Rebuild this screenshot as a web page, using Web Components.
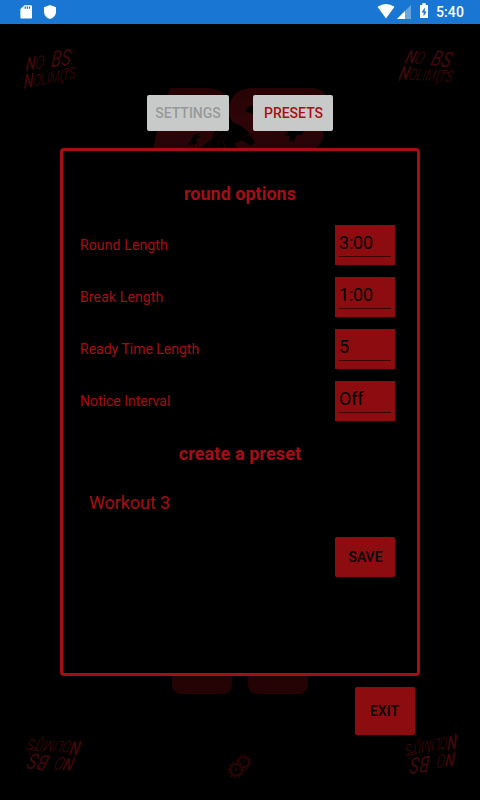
<!DOCTYPE html>
<html lang="en">
<head>
<meta charset="utf-8">
<title>Round timer presets</title>
<style>
html,body{margin:0;width:480px;height:800px;overflow:hidden;background:#000}
body{font-family:Roboto,"Liberation Sans",sans-serif}
</style>
</head>
<body>
<timer-app></timer-app>
<script>
function define(name, markup) {
  const t = document.createElement('template');
  t.innerHTML = markup;
  customElements.define(name, class extends HTMLElement {
    constructor() {
      super();
      this.attachShadow({mode: 'open'}).appendChild(t.content.cloneNode(true));
    }
  });
}

define('status-bar', `
<style>
:host{display:flex;justify-content:space-between;align-items:flex-start;height:24px;background:#1976d2;color:#fff;box-sizing:border-box}
svg{display:block}
.time{font:500 14px/24px Roboto,sans-serif;letter-spacing:.1px;width:44px}
.r{display:flex}
</style>
<svg width="70" height="24" fill="#fff"><path fill-rule="evenodd" d="M24.500 5.200h6.300a1.200 1.200 0 0 1 1.200 1.200v11a1.200 1.200 0 0 1-1.200 1.200h-9.200a1.200 1.200 0 0 1-1.200-1.200V9zM24.600 6.400v2.400h1.300V6.400zM26.700 6.400v2.400H28V6.400zM28.800 6.400v2.400h1.300V6.400z"/><path d="M50 5l6 2.300v4.500c0 3.400-2.500 6.300-6 7.200-3.500-.9-6-3.800-6-7.200V7.300z"/></svg>
<div class="r"><svg width="70" height="24" viewBox="366 0 70 24" fill="#fff"><path d="M377.500 6.800Q386 1.400 394.500 6.800L386 18.400z"/><path fill-opacity=".35" d="M411 5v14h-14z"/><path d="M405 11v8h-8z"/><path fill-rule="evenodd" d="M422.300 3.300h3.400V5h2.300v13h-8V5h2.300zM424.800 7.500l-3.200 5h2v4l3-5h-1.800z"/></svg><span class="time">5:40</span></div>`);

define('graffiti-tag', `
<style>
:host{display:block;position:relative;width:52px;height:42px;color:#42080b;font-family:Roboto,sans-serif;font-style:italic;font-weight:300}
div{transform-origin:0 0;white-space:nowrap;line-height:20px;height:20px;width:max-content}
.a{font-size:18px;transform:translate(2px,4px) rotate(-7deg) skewX(-12deg) scale(.76,1);word-spacing:5px}
.b{font-size:16px;transform:translate(-1px,3px) rotate(-11deg) skewX(-12deg) scale(.74,1)}
b{font-weight:500}
.a b:last-child{font-size:22px;font-weight:400}
.b b{font-size:19px}
svg{position:absolute;left:0;top:0;fill:none;stroke:#3a070a;stroke-width:1;stroke-linecap:round}
</style>
<div class="a"><b>N</b>O <b>BS</b>.</div><div class="b"><b>N</b>OLIMITS</div>
<svg width="52" height="42" viewBox="0 0 52 42"><path d="M3 18L2 23M1 36L0 41M40 23l8-3M37 35l1-4"/></svg>`);

define('brand-logo', `
<style>:host{display:block}svg{display:block}</style>
<svg width="190" height="70" viewBox="145 82 190 70">
<defs><linearGradient id="g" gradientUnits="userSpaceOnUse" x1="0" y1="88" x2="0" y2="150"><stop stop-color="#260305"/><stop offset=".5" stop-color="#2e0508"/><stop offset="1" stop-color="#250305"/></linearGradient></defs>
<g fill="url(#g)">
<path d="M172 88h35q21 1 22 17-1 15-14 23l-2 10-15 12h-45q5-28 15-55 1-7 4-7z"/>
<path d="M229 107q3-19 24-19h26q12 0 12 4l-4 13h-32q-10 1-9 7l36 9q10 14 0 29h-60l7-15 15-4q-17-8-15-24z"/>
<path d="M276 88h38q14 2 14 17-2 13-8 19 6 9 2 17-5 9-16 9h-36z"/>
</g>
<g fill="#000"><path d="M194 135l7-2-5 4 5-1-6 5 4 1-6 3 3 5h15q-3-10 6-19h10q0-5 5-9 9 3 15 9l8 11-4 4-9-6-7 3 3 7h-32l-6-3-7 3v-6l-5 1z"/><path d="M288 131h16l-2 4h-5l-3 6h-5l1-5h-5z"/></g>
<path d="M211 150q-3-13 11-20M219 150q-4-10 5-16M227 150q-6-7-2-13M242 138l8-5" fill="none" stroke="#240305"/>
</svg>`);

define('gear-pair', `
<style>:host{display:block}svg{display:block}</style>
<svg width="26" height="26" viewBox="227 754 26 26" fill="none" stroke="#290405">
<circle cx="243.800" cy="762" r="5.200" stroke-width="2.200"/><circle cx="243.800" cy="762" r="7.100" stroke-width="1.600" stroke-dasharray="1.600 2.117"/><circle cx="243.800" cy="762" r=".6"/>
<circle cx="236.200" cy="769.800" r="7.500" fill="#000" stroke="none"/>
<circle cx="236.200" cy="769.800" r="5.900" stroke-width="2.400"/><circle cx="236.200" cy="769.800" r="8" stroke-width="1.800" stroke-dasharray="1.700 2.489"/><circle cx="236.200" cy="769.800" r="1" fill="#290405"/></svg>`);

define('flat-button', `
<style>
:host{display:flex;align-items:center;justify-content:center;box-sizing:border-box;border-radius:2px;background:#8c0c10;color:#000;font:500 14px/16px Roboto,sans-serif;width:60px;height:40px}
:host([tone=light]){background:#c8caca;color:#a80f16;width:80px;height:36px;padding-left:1px}
:host([off]){color:#979999;padding-left:0}
</style><slot></slot>`);

define('option-row', `
<style>
:host{display:flex;justify-content:space-between;align-items:center;height:40px;color:#a50e14;font-size:14px}
.field{box-sizing:border-box;width:60px;height:40px;background:#8c0c10;color:#000;padding:6px 4px 0;font-size:18px;line-height:24px;letter-spacing:-.2px}
.field:after{content:"";display:block;height:1px;margin-top:1px;background:#3e0507}
</style>
<span><slot></slot></span><div class="field"><slot name="value"></slot></div>`);

define('options-panel', `
<style>
:host{display:flex;flex-direction:column;box-sizing:border-box;width:360px;height:528px;border:3px solid #a50e14;border-radius:4px;background:#000;color:#a50e14;padding:30px 22px 0 17px}
h2{font:700 18px/26px Roboto,sans-serif;margin:0 -5px 0 0;text-align:center}
.rows{display:flex;flex-direction:column;gap:12px;margin:18px 0 20px}
.loose{letter-spacing:.13px}
.name{font-size:18px;line-height:24px;margin:24px 0 22px 9px;letter-spacing:-.08px}
flat-button{align-self:flex-end;padding-left:1px}
</style>
<h2>round options</h2>
<div class="rows">
<option-row class="loose">Round Length<span slot="value">3:00</span></option-row>
<option-row class="loose">Break Length<span slot="value">1:00</span></option-row>
<option-row>Ready Time Length<span slot="value">5</span></option-row>
<option-row>Notice Interval<span slot="value">Off</span></option-row>
</div>
<h2 style="letter-spacing:.1px">create a preset</h2>
<div class="name">Workout 3</div>
<flat-button>SAVE</flat-button>`);

define('timer-app', `
<style>
:host{display:block;position:relative;width:480px;height:800px;background:#000}
.bg{position:absolute}
.ui{position:relative;display:flex;flex-direction:column;padding-top:71px}
.tabs{display:flex;gap:24px;margin-left:147px;margin-bottom:17px}
options-panel{margin-left:60px}
.exit{width:60px;height:48px;margin:11px 0 0 355px}
.foot{width:60px;height:30px;border-radius:9px;background:#240305;top:664px}
</style>
<status-bar></status-bar>
<brand-logo class="bg" style="left:145px;top:82px"></brand-logo>
<graffiti-tag class="bg" style="left:25px;top:49px"></graffiti-tag>
<graffiti-tag class="bg" style="left:403px;top:47px;transform:rotate(14deg)"></graffiti-tag>
<graffiti-tag class="bg" style="left:25px;top:732px;transform:rotate(194deg)"></graffiti-tag>
<graffiti-tag class="bg" style="left:404px;top:732px;transform:rotate(180deg)"></graffiti-tag>
<div class="bg foot" style="left:172px"></div><div class="bg foot" style="left:248px"></div>
<gear-pair class="bg" style="left:227px;top:754px"></gear-pair>
<div class="ui">
<div class="tabs"><flat-button tone="light" off style="width:82px">SETTINGS</flat-button><flat-button tone="light">PRESETS</flat-button></div>
<options-panel></options-panel>
<flat-button class="exit" style="padding-right:1px">EXIT</flat-button>
</div>`);
</script>
</body>
</html>
